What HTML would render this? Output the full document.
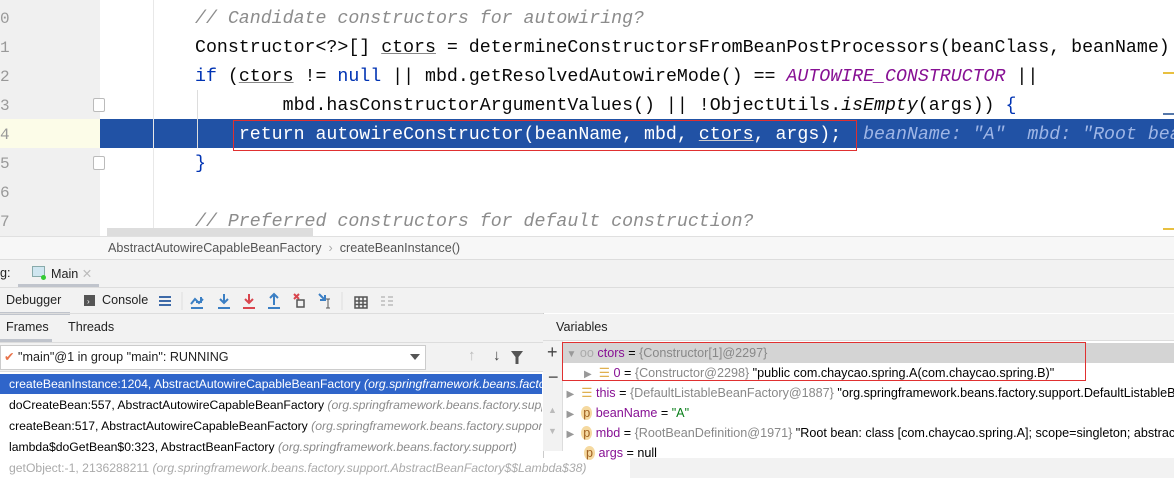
<!DOCTYPE html>
<html><head><meta charset="utf-8"><style>
*{margin:0;padding:0;box-sizing:border-box}
body{width:1174px;height:470px;overflow:hidden;background:#f2f2f2;font-family:"Liberation Sans",sans-serif;position:relative}
.abs{position:absolute;white-space:pre}
.code{font-family:"Liberation Mono",monospace;font-size:18.25px;line-height:29px;color:#080808}
.cm{color:#8c8c8c;font-style:italic}
.kw{color:#0033b3}
.ct{color:#871094;font-style:italic}
.u{text-decoration:underline;text-decoration-color:#888}
.ui{font-size:12.6px;color:#222}
.ln{font-family:"Liberation Mono",monospace;font-size:16px;color:#999;line-height:29px}
.gray{color:#8a8a8a;font-style:italic}
.row{position:absolute;left:0;height:20px;line-height:20px;font-size:12.2px;white-space:pre;padding-left:9px;width:542px;overflow:hidden}
.v{position:absolute;left:563px;height:20px;line-height:20px;font-size:12.6px;white-space:pre;width:611px;overflow:hidden}
.vn{color:#871094}
.tri{color:#999;font-size:10px}
</style></head><body>
<!-- editor -->
<div class="abs" style="left:0;top:0;width:1174px;height:236px;background:#fff"></div>
<div class="abs" style="left:0;top:0;width:100px;height:236px;background:#f0f0f0"></div>
<div class="abs" style="left:0;top:119px;width:100px;height:29px;background:#fcfce8"></div>
<div class="abs" style="left:100px;top:119px;width:1074px;height:29px;background:#2152a5"></div>
<div class="abs" style="left:153px;top:0;width:1px;height:236px;background:#e8e8e8"></div>
<div class="abs" style="left:197px;top:90px;width:1px;height:58px;background:#ddd"></div>
<div class="abs ln" style="left:0;top:5px">0
1
2
3
4
5
6
7</div>
<div class="abs" style="left:93px;top:98px;width:12px;height:14px;border:1px solid #bbb;background:#fff;border-radius:2px"></div>
<div class="abs" style="left:93px;top:156px;width:12px;height:14px;border:1px solid #bbb;background:#fff;border-radius:2px"></div>
<div class="abs code" style="left:195px;top:5px"><span class="cm">// Candidate constructors for autowiring?</span>
Constructor&lt;?&gt;[] <span class="u">ctors</span> = determineConstructorsFromBeanPostProcessors(beanClass, beanName)
<span class="kw">if</span> (<span class="u">ctors</span> != <span class="kw">null</span> || mbd.getResolvedAutowireMode() == <span class="ct">AUTOWIRE_CONSTRUCTOR</span> ||
        mbd.hasConstructorArgumentValues() || !ObjectUtils.<i>isEmpty</i>(args)) <span style="color:#0033b3">{</span>
    <span style="color:#fff">return autowireConstructor(beanName, mbd, <span class="u" style="text-decoration-color:#ccc">ctors</span>, args);</span>  <span style="color:#9fb6e6;font-style:italic">beanName: "A"  mbd: "Root bean</span>
<span style="color:#0033b3">}</span>

<span class="cm">// Preferred constructors for default construction?</span></div>
<div class="abs" style="left:233px;top:120px;width:624px;height:31px;border:1.5px solid #e03030"></div>
<div class="abs" style="left:107px;top:228px;width:206px;height:8px;background:#ddd"></div>
<div class="abs" style="left:1163px;top:72px;width:11px;height:2px;background:#e8c040"></div>
<div class="abs" style="left:1163px;top:113px;width:11px;height:2px;background:#5577aa"></div>
<div class="abs" style="left:1163px;top:228px;width:11px;height:2px;background:#e8c040"></div>
<!-- breadcrumb -->
<div class="abs" style="left:0;top:236px;width:1174px;height:24px;background:#f7f7f7;border-top:1px solid #e0e0e0;border-bottom:1px solid #ddd"></div>
<div class="abs ui" style="left:108px;top:241px;color:#555">AbstractAutowireCapableBeanFactory  <span style="color:#aaa">›</span>  createBeanInstance()</div>
<!-- tab bar -->
<div class="abs ui" style="left:0;top:266px">g:</div>
<div class="abs" style="left:32px;top:266px;width:13px;height:11px;border:1.5px solid #8aa;background:#cfe6f0"></div>
<div class="abs" style="left:41px;top:275px;width:5px;height:5px;border-radius:50%;background:#3c3"></div>
<div class="abs ui" style="left:51px;top:266px">Main <span style="color:#bbb">✕</span></div>
<div class="abs" style="left:18px;top:284px;width:81px;height:3px;background:#c0c4cc"></div>
<div class="abs" style="left:0;top:287px;width:1174px;height:1px;background:#ddd"></div>
<!-- toolbar -->
<div class="abs ui" style="left:6px;top:293px">Debugger</div>
<div class="abs" style="left:0;top:312px;width:70px;height:3px;background:#c0c4cc"></div>
<div class="abs" style="left:84px;top:295px;width:11px;height:11px;background:#555"></div>
<div class="abs" style="left:87px;top:297px;color:#fff;font-size:8px">›</div>
<div class="abs ui" style="left:102px;top:293px">Console</div>
<svg class="abs" style="left:156px;top:290px" width="250" height="22">
<g stroke="#3b7fc4" stroke-width="2" fill="none">
<path d="M3 7h12M3 11h12M3 15h12" stroke="#3e6aa8"/>
<path d="M35 14 l4-5 4 4 4-4 M45 7v5h-5" /><path d="M35 18h12"/>
<path d="M68 4v9 M64 9l4 4 4-4 M62 18h12"/>
<path d="M93 4v9 M89 9l4 4 4-4 M87 18h12" stroke="#d9464e"/>
<path d="M118 15v-10 M114 8l4-4 4 4 M112 18h12"/>
<path d="M138 4l5 5 M143 4l-5 5" stroke="#d9464e"/><path d="M141 10h7v7h-7z" stroke="#555" stroke-width="1.5"/>
<path d="M163 4l6 6 M169 5v5h-5"/><path d="M172 9v9 M170 9h4 M170 18h4" stroke="#555" stroke-width="1"/>
<path d="M199 7h12v11h-12z M199 11h12 M199 14.5h12 M203 7v11 M207 7v11" stroke="#555" stroke-width="1.5"/>
<path d="M225 7h4M225 11h4M225 15h4M232 7h5M232 11h5M232 15h5" stroke="#bbb" stroke-width="1.5"/>
</g>
<path d="M26 2v18 M186 2v18" stroke="#ddd"/>
</svg>
<div class="abs" style="left:0;top:313px;width:1174px;height:1px;background:#ddd"></div>
<!-- frames header -->
<div class="abs ui" style="left:6px;top:320px">Frames</div>
<div class="abs ui" style="left:68px;top:320px">Threads</div>
<div class="abs" style="left:0;top:339px;width:52px;height:3px;background:#c0c4cc"></div>
<div class="abs" style="left:0;top:342px;width:543px;height:1px;background:#ddd"></div>
<!-- dropdown -->
<div class="abs" style="left:0;top:345px;width:426px;height:25px;background:#fff;border:1px solid #ccc"></div>
<div class="abs ui" style="left:4px;top:349px"><span style="color:#e8734a">✔</span> "main"@1 in group "main": RUNNING</div>
<div class="abs" style="left:410px;top:354px;width:0;height:0;border-left:5px solid transparent;border-right:5px solid transparent;border-top:6px solid #555"></div>
<div class="abs ui" style="left:468px;top:347px;color:#bbb;font-size:15px">↑</div>
<div class="abs ui" style="left:493px;top:347px;color:#444;font-size:15px">↓</div>
<svg class="abs" style="left:484px;top:349px" width="40" height="16"><path d="M27 2h12l-4.5 6v7h-3v-7z" fill="#555"/></svg>
<div class="abs" style="left:0;top:371px;width:543px;height:1px;background:#ddd"></div>
<!-- frames list -->
<div class="abs" style="left:0;top:372px;width:543px;height:98px;background:#fff"></div>
<div class="row" style="top:374px;background:#2f65ca;color:#fff">createBeanInstance:1204, AbstractAutowireCapableBeanFactory <i>(org.springframework.beans.factory.support)</i></div>
<div class="row" style="top:395px">doCreateBean:557, AbstractAutowireCapableBeanFactory <span class="gray">(org.springframework.beans.factory.support)</span></div>
<div class="row" style="top:416px">createBean:517, AbstractAutowireCapableBeanFactory <span class="gray">(org.springframework.beans.factory.support)</span></div>
<div class="row" style="top:437px">lambda$doGetBean$0:323, AbstractBeanFactory <span class="gray">(org.springframework.beans.factory.support)</span></div>
<div class="row" style="top:458px;color:#aaa;width:630px;background:#fff">getObject:-1, 2136288211 <i>(org.springframework.beans.factory.support.AbstractBeanFactory$$Lambda$38)</i></div>
<!-- variables -->
<div class="abs" style="left:543px;top:313px;width:631px;height:145px;background:#fff;border-left:1px solid #ccc"></div>
<div class="abs" style="left:543px;top:314px;width:631px;height:27px;background:#f2f2f2;border-bottom:1px solid #ddd"></div>
<div class="abs ui" style="left:556px;top:320px">Variables</div>
<div class="abs" style="left:543px;top:341px;width:20px;height:110px;background:#f2f2f2;border-right:1px solid #ddd"></div>
<div class="abs" style="left:547px;top:342px;font-size:18px;color:#444">+</div>
<div class="abs" style="left:548px;top:367px;font-size:18px;color:#444">−</div>
<div class="abs" style="left:548px;top:405px;font-size:9px;color:#bbb">▲</div>
<div class="abs" style="left:548px;top:426px;font-size:9px;color:#bbb">▼</div>
<div class="abs" style="left:563px;top:343px;width:611px;height:20px;background:#d4d4d4"></div>
<div class="v" style="top:343px"> <span class="tri">▼</span> <span style="color:#aaa">oo</span> <span class="vn">ctors</span> = <span style="color:#888">{Constructor[1]@2297}</span></div>
<div class="v" style="top:363px">      <span class="tri">▶</span>  <span style="color:#e0b050">☰</span> <span class="vn">0</span> = <span style="color:#888">{Constructor@2298}</span> "public com.chaycao.spring.A(com.chaycao.spring.B)"</div>
<div class="v" style="top:383px"> <span class="tri">▶</span>  <span style="color:#e0b050">☰</span> <span class="vn">this</span> = <span style="color:#888">{DefaultListableBeanFactory@1887}</span> "org.springframework.beans.factory.support.DefaultListableBeanFactory"</div>
<div class="v" style="top:403px"> <span class="tri">▶</span>  <span style="background:#f5d9a0;border-radius:50%;color:#a06020;padding:0 2px">p</span> <span class="vn">beanName</span> = <span style="color:#067d17">"A"</span></div>
<div class="v" style="top:423px"> <span class="tri">▶</span>  <span style="background:#f5d9a0;border-radius:50%;color:#a06020;padding:0 2px">p</span> <span class="vn">mbd</span> = <span style="color:#888">{RootBeanDefinition@1971}</span> "Root bean: class [com.chaycao.spring.A]; scope=singleton; abstract=false"</div>
<div class="v" style="top:443px">      <span style="background:#f5d9a0;border-radius:50%;color:#a06020;padding:0 2px">p</span> <span class="vn">args</span> = null</div>
<div class="abs" style="left:562px;top:342px;width:524px;height:39px;border:1.5px solid #e03030"></div>
</body></html>
